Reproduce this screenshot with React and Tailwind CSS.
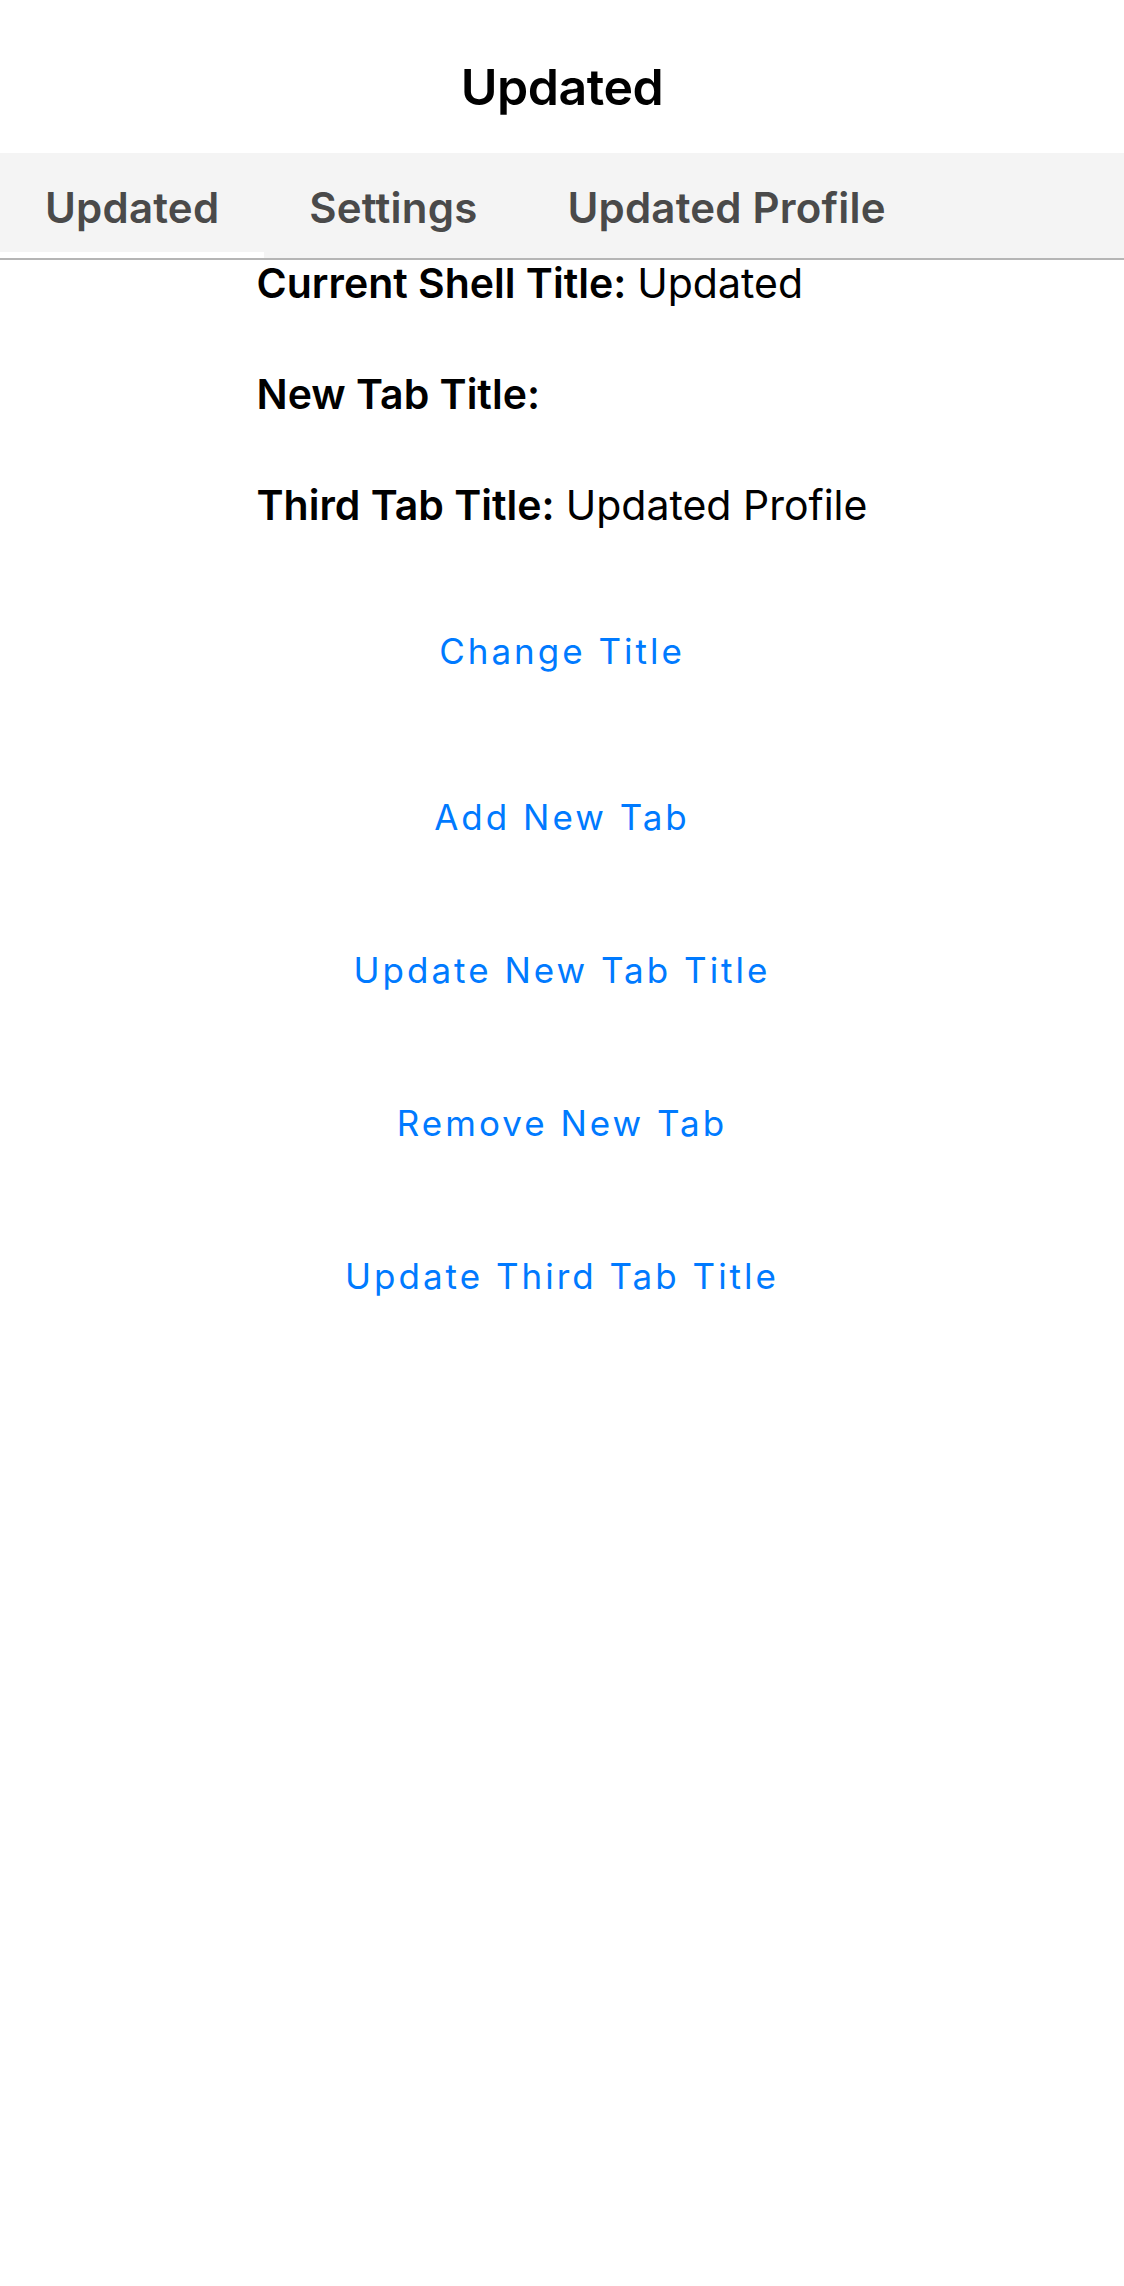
import React, { useState } from "react";

const tabs = ["Updated", "Settings", "Updated Profile"];

const actions = [
  "Change Title",
  "Add New Tab",
  "Update New Tab Title",
  "Remove New Tab",
  "Update Third Tab Title",
];

export default function App() {
  const [active, setActive] = useState(0);

  return (
    <div className="min-h-[2286px] bg-white" style={{ fontFamily: "Inter, 'Noto Sans', sans-serif" }}>
      {/* nav bar */}
      <div className="h-[153px] flex items-center justify-center pt-[22px]">
        <h1 className="text-[50px] font-semibold text-black tracking-[-0.5px]">Updated</h1>
      </div>

      {/* top tabs */}
      <div className="h-[107px] bg-[#f4f4f4] border-b-2 border-[#b5b5b5] flex">
        {tabs.map((t, i) => (
          <button
            key={t}
            type="button"
            onClick={() => setActive(i)}
            className="relative px-[45px] h-full flex items-center text-[42px] font-semibold text-[#4a4a4a] tracking-[0.2px]"
          >
            <span className="pt-[4px]">{t}</span>
            {active === i && (
              <span className="absolute left-0 right-0 bottom-0 h-[6px] bg-white" />
            )}
          </button>
        ))}
      </div>

      {/* labels */}
      <div className="flex justify-center">
        <div className="w-fit flex flex-col text-[41px] text-black">
          <p className="h-[111px] flex items-center -mt-[32px]">
            <span className="font-semibold mr-[11px]">Current Shell Title:</span>Updated
          </p>
          <p className="h-[111px] flex items-center">
            <span className="font-semibold">New Tab Title:</span>
          </p>
          <p className="h-[111px] flex items-center">
            <span className="font-semibold mr-[11px]">Third Tab Title:</span>Updated Profile
          </p>
        </div>
      </div>

      {/* actions */}
      <div className="flex flex-col items-center mt-[14px]">
        {actions.map((a, i) => (
          <button
            key={a}
            type="button"
            className={`h-[153px] flex items-center text-[35px] text-[#007aff] tracking-[3px] ${
              i === 0 ? "mb-[13px]" : ""
            }`}
          >
            {a}
          </button>
        ))}
      </div>
    </div>
  );
}
